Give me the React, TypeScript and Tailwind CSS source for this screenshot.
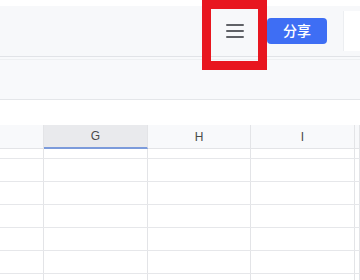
import React from "react";

const cols = ["", "G", "H", "I", ""];
const widths = ["w-[44px]", "w-[104px]", "w-[103px]", "w-[104px]", "flex-1"];

function HeaderCell({ label, i }: { label: string; i: number }) {
  const selected = label === "G";
  return (
    <div
      className={`${widths[i]} h-full shrink-0 border-r border-[#e3e4e7] flex items-center justify-center text-[12px] text-[#4a4a4a] ${
        selected ? "bg-[#e9eaed] border-b-2 border-b-[#7c9bdb]" : "bg-[#f8f9fb] border-b border-b-[#e3e4e7]"
      }`}
      style={{ fontFamily: '"Liberation Sans", Arial, sans-serif' }}
    >
      {label}
    </div>
  );
}

function Row({ h }: { h: string }) {
  return (
    <div className={`flex ${h} border-b border-[#e6e7ea]`}>
      {cols.map((_, i) => (
        <div key={i} className={`${widths[i]} shrink-0 h-full border-r border-[#e3e4e7]`} />
      ))}
    </div>
  );
}

export default function App() {
  return (
    <div
      className="relative w-[360px] h-[280px] overflow-hidden bg-white"
      style={{ fontFamily: '"Noto Sans", "Noto Sans CJK SC", sans-serif' }}
    >
      <div className="h-[6px] bg-white" />
      <header className="h-[51px] bg-[#f7f8fa] border-b border-[#e1e3e7] flex items-center">
        <div className="flex-1" />
        <button className="w-[47px] h-[40px] flex items-center justify-center mr-[4px]">
          <svg width="18" height="14" viewBox="0 0 18 14">
            <path d="M1 1h16M1 7h16M1 13h16" stroke="#5f6166" strokeWidth="2" strokeLinecap="round" />
          </svg>
        </button>
        <button className="ml-[5px] w-[60px] h-[26px] rounded-[4px] bg-[#3e6ef4] text-white text-[14px] font-medium leading-none flex items-center justify-center -mt-[1px]">
          分享
        </button>
        <div className="ml-[16px] w-[17px] h-[40px] bg-white border-l border-[#eceef1]" />
      </header>
      <div className="h-[43px] bg-[#f8f9fb] border-b border-[#e4e6e9]">
        <div className="h-[3px] border-b border-[#eef0f2]" />
      </div>
      <div className="h-[25px] bg-white" />
      <div className="flex h-[24px]">
        {cols.map((c, i) => (
          <HeaderCell key={i} label={c} i={i} />
        ))}
      </div>
      <Row h="h-[10px]" />
      <Row h="h-[23px]" />
      <Row h="h-[23px]" />
      <Row h="h-[23px]" />
      <Row h="h-[23px]" />
      <Row h="h-[23px]" />
      <Row h="h-[23px]" />

      <div className="absolute left-[202px] top-0 w-[65px] h-[70px] border-[9px] border-[#e8161f]" />
    </div>
  );
}
